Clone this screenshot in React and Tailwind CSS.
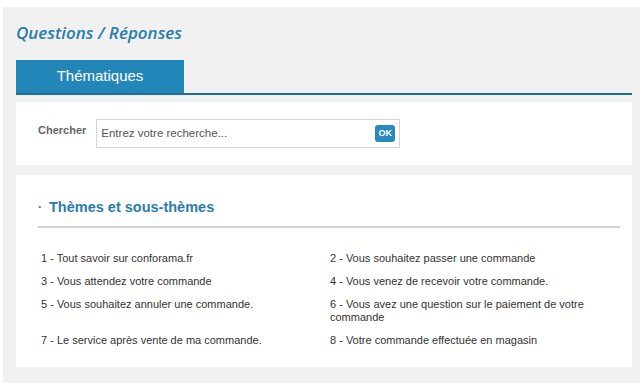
import React from "react";

const themes = [
  "1 - Tout savoir sur conforama.fr",
  "2 - Vous souhaitez passer une commande",
  "3 - Vous attendez votre commande",
  "4 - Vous venez de recevoir votre commande.",
  "5 - Vous souhaitez annuler une commande.",
  "6 - Vous avez une question sur le paiement de votre commande",
  "7 - Le service après vente de ma commande.",
  "8 - Votre commande effectuée en magasin",
];

const App = () => {
  return (
    <div className="w-[640px] h-[383px] bg-white pt-[7px] pl-[3px] overflow-hidden font-['Liberation_Sans',Arial,sans-serif]">
      <div className="h-full bg-[#f1f1f1] pl-[13px] pr-[8px]">
        {/* titre */}
        <h1 className="pt-[15px] h-[53px] font-['Open_Sans',sans-serif] italic font-semibold text-[17px] leading-[22px] text-[#2a7dab]">
          Questions / Réponses
        </h1>

        {/* onglets */}
        <div className="border-b-2 border-[#1f6f99]">
          <div className="w-[168px] h-[33px] bg-[#2386b8] flex items-center justify-center text-white text-[15px]">
            Thématiques
          </div>
        </div>

        {/* recherche */}
        <div className="mt-[7px] h-[63px] bg-white flex items-center pl-[22px]">
          <span className="text-[11px] font-bold text-[#666] mr-[10px] -mt-[6px]">Chercher</span>
          <div className="w-[304px] h-[29px] border border-[#d6d6d6] flex items-center justify-between pl-[4px] pr-[4px]">
            <input
              className="flex-1 text-[11.5px] text-[#555] placeholder:text-[#555] outline-none bg-transparent"
              type="text"
              placeholder="Entrez votre recherche..."
            />
            <button className="w-[20px] h-[17px] rounded-[3px] bg-[#2a8abd] text-white text-[9px] font-bold leading-none">
              OK
            </button>
          </div>
        </div>

        {/* thèmes */}
        <div className="mt-[10px] h-[192px] bg-white pl-[22px] pr-[12px] pt-[23px]">
          <div className="flex items-center h-[20px]">
            <span className="text-[#2a7dab] text-[12px] font-bold w-[11px] -mt-[3px]">·</span>
            <h2 className="text-[14.5px] font-bold text-[#2a7dab]">Thèmes et sous-thèmes</h2>
          </div>
          <div className="mt-[8px] border-t-2 border-[#d4d4d4]" />
          <div className="grid grid-cols-[289px_1fr] gap-y-[10px] pl-[3px] pt-[24px] text-[11px] leading-[13px] text-[#333]">
            {themes.map((t) => (
              <p key={t} className="pr-[20px]">{t}</p>
            ))}
          </div>
        </div>
      </div>
    </div>
  );
};

export default App;
